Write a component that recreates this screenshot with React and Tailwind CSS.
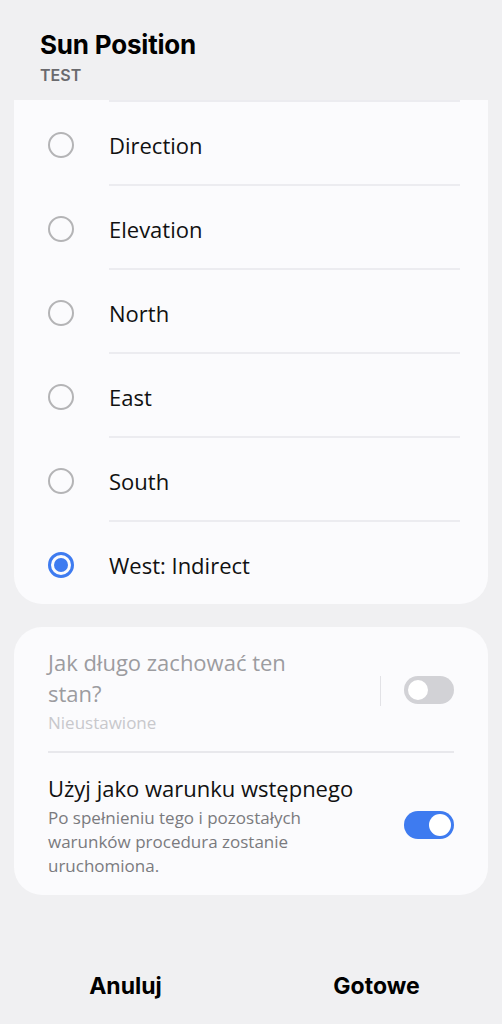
import React, { useState } from 'react';

const options = ['Direction', 'Elevation', 'North', 'East', 'South', 'West: Indirect'];

const Radio = ({ checked }) =>
  checked ? (
    <span className="w-[26px] h-[26px] rounded-full border-[3px] border-[#3e7bf0] flex items-center justify-center">
      <span className="w-[14px] h-[14px] rounded-full bg-[#3e7bf0]" />
    </span>
  ) : (
    <span className="w-[26px] h-[26px] rounded-full border-2 border-[#b4b4b6]" />
  );

const Toggle = ({ on }) =>
  on ? (
    <span className="w-[50px] h-[28px] rounded-full bg-[#3e7bf0] flex items-center justify-end pr-[3px]">
      <span className="w-[22px] h-[22px] rounded-full bg-white" />
    </span>
  ) : (
    <span className="w-[50px] h-[28px] rounded-full bg-[#d2d2d6] flex items-center pl-[2px]">
      <span className="w-[24px] h-[24px] rounded-full bg-white border-2 border-[#d2d2d6]" />
    </span>
  );

export default function App() {
  const [selected, setSelected] = useState(5);
  const [pre, setPre] = useState(true);

  return (
    <div className="w-[502px] h-[1024px] bg-[#f0f0f2] flex flex-col font-['Open_Sans',sans-serif] overflow-hidden">
      <div className="pl-[40px] pt-[28px] h-[100px] font-['Inter',sans-serif]">
        <div className="text-[26px] font-bold text-black leading-[33px] tracking-[-0.2px]">Sun Position</div>
        <div className="text-[16px] font-semibold text-[#6a6a6e] leading-[20px] mt-[4px]">TEST</div>
      </div>

      <div className="mx-[14px] bg-[#fbfbfd] rounded-b-[28px]">
        <div className="ml-[95px] mr-[28px] border-t-2 border-[#ececf0]" />
        {options.map((o, i) => (
          <div key={o} onClick={() => setSelected(i)} className="flex flex-col">
            <div className="flex items-center h-[82px] pt-[3px]">
              <div className="w-[95px] flex pl-[34px]">
                <Radio checked={selected === i} />
              </div>
              <span className="text-[22px] text-[#111] leading-none pt-[1px]">{o}</span>
            </div>
            {i < options.length - 1 && (
              <div className="ml-[95px] mr-[28px] border-t-2 border-[#ececf0]" />
            )}
          </div>
        ))}
      </div>

      <div className="mx-[14px] mt-[23px] bg-[#fbfbfd] rounded-[28px] px-[34px] pt-[20px] pb-[17px]">
        <div className="flex items-start">
          <div className="flex-1">
            <div className="text-[22px] leading-[31px] text-[#9c9ca0] w-[290px]">Jak długo zachować ten stan?</div>
            <div className="text-[17px] leading-[24px] text-[#c8c8cc] mt-[2px]">Nieustawione</div>
          </div>
          <div className="w-px h-[30px] bg-[#e2e2e6] mr-[23px] mt-[29px]" />
          <div className="mt-[29px] flex">
            <Toggle on={false} />
          </div>
        </div>
        <div className="border-t-2 border-[#e8e8ec] mt-[16px]" />
        <div className="flex items-start pt-[20px]" onClick={() => setPre(!pre)}>
          <div className="flex-1">
            <div className="text-[22px] leading-[30px] text-[#111]">Użyj jako warunku wstępnego</div>
            <div className="text-[17px] leading-[24px] text-[#7a7a7e] w-[300px] mt-[3px]">
              Po spełnieniu tego i pozostałych warunków procedura zostanie uruchomiona.
            </div>
          </div>
          <div className="mt-[38px] flex">
            <Toggle on={pre} />
          </div>
        </div>
      </div>

      <div className="flex-1" />
      <div className="flex h-[76px] items-center font-['Inter',sans-serif]">
        <button className="flex-1 text-[23px] font-bold text-black">Anuluj</button>
        <button className="flex-1 text-[23px] font-bold text-black">Gotowe</button>
      </div>
    </div>
  );
}
